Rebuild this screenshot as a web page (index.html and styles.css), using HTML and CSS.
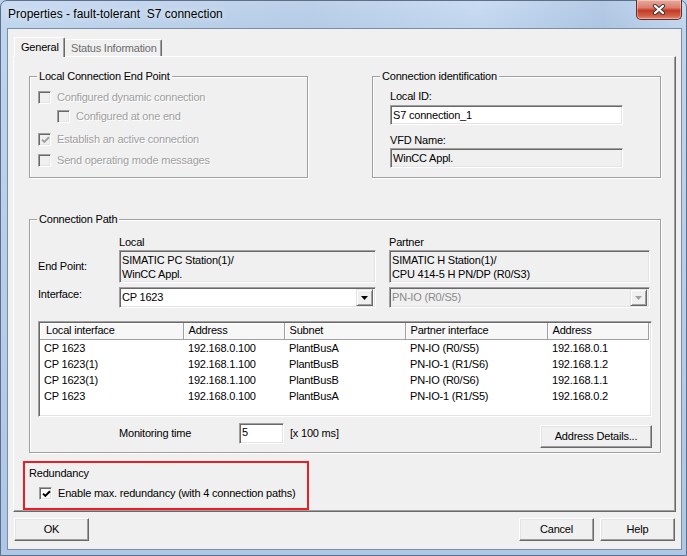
FILE: index.html
```html
<!DOCTYPE html>
<html>
<head>
<meta charset="utf-8">
<title>Properties - fault-tolerant S7 connection</title>
<link rel="stylesheet" href="styles.css">
</head>
<body>
<div class="window">
  <div class="titlebar">
    <span class="title">Properties - fault-tolerant  S7 connection</span>
    <div class="close">
      <svg width="14" height="11" viewBox="0 0 14 11">
        <path d="M3 2 L11 9 M11 2 L3 9" stroke="#3c3c3c" stroke-width="4.2" stroke-linecap="round" fill="none"/>
        <path d="M3 2 L11 9 M11 2 L3 9" stroke="#ffffff" stroke-width="2.2" stroke-linecap="round" fill="none"/>
      </svg>
    </div>
  </div>
  <div class="client">
    <div class="tabs">
      <div class="tab tab-active">General</div>
      <div class="tab tab-inactive">Status Information</div>
    </div>
    <div class="panel">
      <div class="row-top">
        <div class="group group-local">
          <span class="group-title">Local Connection End Point</span>
          <div class="cb-row disabled">
            <span class="cb"></span><span>Configured dynamic connection</span>
          </div>
          <div class="cb-row disabled cb-row-2">
            <span class="cb"></span><span>Configured at one end</span>
          </div>
          <div class="cb-row disabled cb-row-3">
            <span class="cb"><svg width="9" height="9" viewBox="0 0 9 9"><path d="M1 3.6 L3.3 5.9 L8 1.2" stroke="#a0a0a0" stroke-width="2" fill="none"/></svg></span><span>Establish an active connection</span>
          </div>
          <div class="cb-row disabled cb-row-4">
            <span class="cb"></span><span>Send operating mode messages</span>
          </div>
        </div>
        <div class="group group-ident">
          <span class="group-title">Connection identification</span>
          <div class="label">Local ID:</div>
          <div class="field field-id">S7 connection_1</div>
          <div class="label label-vfd">VFD Name:</div>
          <div class="field field-ro field-vfd">WinCC Appl.</div>
        </div>
      </div>

      <div class="group group-path">
        <span class="group-title">Connection Path</span>
        <div class="path-grid">
          <div></div>
          <div class="label">Local</div>
          <div class="label">Partner</div>

          <div class="label label-mid">End Point:</div>
          <div class="field field-ro field-multi">SIMATIC PC Station(1)/<br>WinCC Appl.</div>
          <div class="field field-ro field-multi">SIMATIC H Station(1)/<br>CPU 414-5 H PN/DP (R0/S3)</div>

          <div class="label label-iface">Interface:</div>
          <div class="field combo">
            <span class="combo-text">CP 1623</span>
            <span class="combo-btn"><svg width="7" height="4" viewBox="0 0 7 4"><polygon points="0,0 7,0 3.5,4" fill="#000"/></svg></span>
          </div>
          <div class="field combo combo-disabled">
            <span class="combo-text">PN-IO (R0/S5)</span>
            <span class="combo-btn"><svg width="7" height="4" viewBox="0 0 7 4"><polygon points="0,0 7,0 3.5,4" fill="#a0a0a0"/></svg></span>
          </div>
        </div>

        <div class="listview">
          <table>
            <colgroup>
              <col class="c1"><col class="c2"><col class="c3"><col class="c4"><col class="c5">
            </colgroup>
            <thead>
              <tr><th>Local interface</th><th>Address</th><th>Subnet</th><th>Partner interface</th><th>Address</th></tr>
            </thead>
            <tbody>
              <tr><td>CP 1623</td><td>192.168.0.100</td><td>PlantBusA</td><td>PN-IO (R0/S5)</td><td>192.168.0.1</td></tr>
              <tr><td>CP 1623(1)</td><td>192.168.1.100</td><td>PlantBusB</td><td>PN-IO-1 (R1/S6)</td><td>192.168.1.2</td></tr>
              <tr><td>CP 1623(1)</td><td>192.168.1.100</td><td>PlantBusB</td><td>PN-IO (R0/S6)</td><td>192.168.1.1</td></tr>
              <tr><td>CP 1623</td><td>192.168.0.100</td><td>PlantBusA</td><td>PN-IO-1 (R1/S5)</td><td>192.168.0.2</td></tr>
            </tbody>
          </table>
        </div>

        <div class="monitor-row">
          <span class="monitor-label">Monitoring time</span>
          <div class="field field-monitor">5</div>
          <span class="monitor-unit">[x 100 ms]</span>
          <button class="btn btn-details">Address Details...</button>
        </div>
      </div>

      <div class="redbox">
        <div class="red-title">Redundancy</div>
        <div class="cb-row red-row">
          <span class="cb"><svg width="9" height="9" viewBox="0 0 9 9"><path d="M1 3.6 L3.3 5.9 L8 1.2" stroke="#000" stroke-width="2" fill="none"/></svg></span><span>Enable max. redundancy (with 4 connection paths)</span>
        </div>
      </div>
    </div>

    <div class="buttons">
      <button class="btn btn-ok">OK</button>
      <button class="btn">Cancel</button>
      <button class="btn">Help</button>
    </div>
  </div>
</div>
</body>
</html>
```

FILE: styles.css
```css
* {
  box-sizing: border-box;
  margin: 0;
  padding: 0;
}

html, body {
  width: 687px;
  height: 556px;
  overflow: hidden;
}

body {
  font-family: "Liberation Sans", Arial, sans-serif;
  font-size: 11px;
  line-height: 13px;
  letter-spacing: -0.2px;
  color: #000;
  background: #b9d0eb;
}

.window {
  width: 687px;
  height: 556px;
  border: 1px solid #5d7089;
  border-radius: 7px 7px 0 0;
  background: linear-gradient(180deg, #cadcf2 0, #bfd5ee 28px, #b6cdea 300px, #aec7e6 100%);
  display: flex;
  flex-direction: column;
}

/* ---------- title bar ---------- */
.titlebar {
  height: 27px;
  display: flex;
  align-items: flex-start;
  padding-left: 7px;
  background: linear-gradient(90deg, rgba(255, 255, 255, 0) 0, rgba(150, 175, 205, 0.25) 45%, rgba(255, 255, 255, 0) 70%, rgba(120, 150, 190, 0.25) 88%, rgba(255, 255, 255, 0) 100%);
}

.title {
  font-size: 12px;
  line-height: 15px;
  letter-spacing: 0;
  margin-top: 6px;
  white-space: pre;
  color: #000;
  text-shadow: 0 0 6px rgba(255, 255, 255, 0.9);
}

.close {
  margin-left: auto;
  margin-right: 4px;
  margin-top: -1px;
  width: 46px;
  height: 20px;
  border: 1px solid #6b2a22;
  border-top: none;
  border-radius: 0 0 5px 5px;
  background: linear-gradient(180deg, #e7a99d 0, #dc7f6f 40%, #c33a26 55%, #cf5a43 80%, #e08a73 100%);
  box-shadow: inset 0 0 0 1px rgba(255, 255, 255, 0.35);
  display: flex;
  align-items: center;
  justify-content: center;
}

/* ---------- client area ---------- */
.client {
  margin-left: 6px;
  width: 675px;
  height: 522px;
  border: 1px solid #7c8da2;
  background: #f0f0f0;
  padding: 8px 5px 0 5px;
}

.tabs {
  display: flex;
  align-items: flex-end;
  height: 19px;
  padding-left: 1px;
}

.tab {
  background: #f0f0f0;
  white-space: nowrap;
}

.tab-active {
  position: relative;
  z-index: 1;
  width: 51px;
  height: 20px;
  margin-bottom: -1px;
  border-left: 1px solid #fff;
  border-top: 1px solid #fff;
  border-right: 1px solid #696969;
  border-radius: 2px 2px 0 0;
  box-shadow: inset -1px 0 0 #a0a0a0;
  padding: 3px 0 0 6px;
}

.tab-inactive {
  width: 97px;
  height: 17px;
  border-top: 1px solid #fff;
  border-right: 1px solid #696969;
  border-radius: 0 2px 0 0;
  box-shadow: inset -1px 0 0 #a0a0a0;
  padding: 2px 0 0 6px;
  color: #6d6d6d;
}

.panel {
  width: 663px;
  height: 456px;
  border: 1px solid;
  border-color: #fff #696969 #696969 #fff;
  box-shadow: inset -1px -1px 0 #a0a0a0;
  padding-top: 19px;
}

/* ---------- group boxes ---------- */
.row-top {
  display: flex;
  justify-content: space-between;
  padding: 0 14px 0 15px;
}

.group {
  position: relative;
  border: 1px solid #a0a0a0;
  box-shadow: inset 1px 1px 0 #fff, 1px 1px 0 #fff;
}

.group-title {
  position: absolute;
  top: -7px;
  left: 7px;
  padding: 0 2px;
  background: #f0f0f0;
  line-height: 13px;
  white-space: nowrap;
}

.group-local {
  width: 279px;
  height: 102px;
  padding: 14px 0 0 8px;
}

.group-ident {
  width: 289px;
  height: 102px;
  padding: 13px 0 0 17px;
}

.group-path {
  margin: 41px 0 0 15px;
  width: 632px;
  height: 234px;
  padding: 16px 8px 0 8px;
}

/* ---------- checkboxes ---------- */
.cb-row {
  display: flex;
  align-items: center;
  height: 13px;
  gap: 6px;
  white-space: nowrap;
}

.cb-row-2 { margin-top: 6px; margin-left: 19px; }
.cb-row-3 { margin-top: 10px; }
.cb-row-4 { margin-top: 8px; }

.cb {
  width: 13px;
  height: 13px;
  flex: none;
  border: 1px solid;
  border-color: #a0a0a0 #fff #fff #a0a0a0;
  box-shadow: inset 1px 1px 0 #696969, inset -1px -1px 0 #e3e3e3;
  background: #fff;
  display: flex;
  align-items: center;
  justify-content: center;
  padding: 1px 0 0 1px;
}

.disabled {
  color: #a0a0a0;
  text-shadow: 1px 1px 0 #fff;
}

.disabled .cb {
  background: #f0f0f0;
}

/* ---------- labels and fields ---------- */
.label {
  line-height: 13px;
  white-space: nowrap;
}

.field {
  border: 1px solid;
  border-color: #a0a0a0 #fff #fff #a0a0a0;
  box-shadow: inset 1px 1px 0 #696969, inset -1px -1px 0 #e3e3e3;
  background: #fff;
  padding: 0 0 0 2px;
  white-space: nowrap;
}

.field-id,
.field-vfd {
  width: 233px;
  height: 20px;
  display: flex;
  align-items: center;
}

.field-id { margin-top: 2px; }
.label-vfd { margin-top: 9px; }
.field-vfd { margin-top: 1px; }

.field-ro {
  background: #f0f0f0;
}

.path-grid {
  display: grid;
  grid-template-columns: 68px 257px 261px;
  grid-template-rows: 14px 33px 25px;
  column-gap: 13px;
}

.label-mid {
  align-self: center;
}

.label-iface {
  align-self: start;
  margin-top: 5px;
}

.field-multi {
  height: 33px;
  padding: 2px 0 0 2px;
  line-height: 14px;
}

.combo {
  margin-top: 4px;
  height: 21px;
  display: flex;
  align-items: center;
  padding: 2px 2px 2px 2px;
}

.combo-text {
  flex: 1;
  padding-left: 0;
}

.combo-btn {
  width: 17px;
  height: 17px;
  flex: none;
  border: 1px solid;
  border-color: #e3e3e3 #696969 #696969 #e3e3e3;
  box-shadow: inset 1px 1px 0 #fff, inset -1px -1px 0 #a0a0a0;
  background: #f0f0f0;
  display: flex;
  align-items: center;
  justify-content: center;
  padding-top: 1px;
}

.combo-disabled {
  background: #f0f0f0;
  color: #8a8a8a;
}

/* ---------- list view ---------- */
.listview {
  margin-top: 13px;
  width: 614px;
  height: 96px;
  border: 1px solid;
  border-color: #a0a0a0 #fff #fff #a0a0a0;
  box-shadow: inset 1px 1px 0 #696969, inset -1px -1px 0 #e3e3e3;
  background: #fff;
  padding: 1px;
  overflow: hidden;
}

.listview table {
  border-collapse: collapse;
  table-layout: fixed;
  width: 608px;
}

.c1 { width: 143px; }
.c2 { width: 101px; }
.c3 { width: 121px; }
.c4 { width: 142px; }
.c5 { width: 101px; }

.listview th {
  height: 16px;
  font-weight: normal;
  text-align: left;
  padding: 0 0 0 5px;
  background: #f7f7f7;
  border-right: 1px solid #a0a0a0;
  border-bottom: 1px solid #a0a0a0;
  box-shadow: inset 1px 1px 0 #fff;
  white-space: nowrap;
  line-height: 15px;
}

.listview th:first-child {
  padding-left: 6px;
}

.listview td {
  height: 16px;
  padding: 0 0 0 5px;
  white-space: nowrap;
  line-height: 16px;
}

.listview td:first-child {
  padding-left: 4px;
}

/* ---------- monitoring row ---------- */
.monitor-row {
  margin-top: 6px;
  display: flex;
  align-items: flex-start;
  height: 25px;
}

.monitor-label {
  margin-left: 81px;
  width: 120px;
  line-height: 21px;
}

.field-monitor {
  width: 45px;
  height: 21px;
  line-height: 17px;
  padding-left: 2px;
}

.monitor-unit {
  margin-left: 6px;
  line-height: 21px;
}

/* ---------- buttons ---------- */
.btn {
  width: 75px;
  height: 23px;
  border: 1px solid;
  border-color: #fff #696969 #696969 #fff;
  box-shadow: inset -1px -1px 0 #a0a0a0, inset 1px 1px 0 #e3e3e3;
  background: #f0f0f0;
  font-family: "Liberation Sans", Arial, sans-serif;
  font-size: 11px;
  letter-spacing: -0.2px;
  color: #000;
  line-height: 13px;
  padding: 0;
}

.btn-details {
  margin-left: auto;
  margin-top: 2px;
  width: 112px;
}

.redbox {
  margin: 8px 0 0 9px;
  width: 286px;
  height: 49px;
  border: 2px solid #ee1c24;
  padding: 4px 0 0 4px;
}

.red-row {
  margin-top: 7px;
  margin-left: 10px;
}

.buttons {
  display: flex;
  gap: 6px;
  margin-top: 6px;
  padding: 0 1px;
}

.btn-ok {
  margin-right: auto;
}
```
